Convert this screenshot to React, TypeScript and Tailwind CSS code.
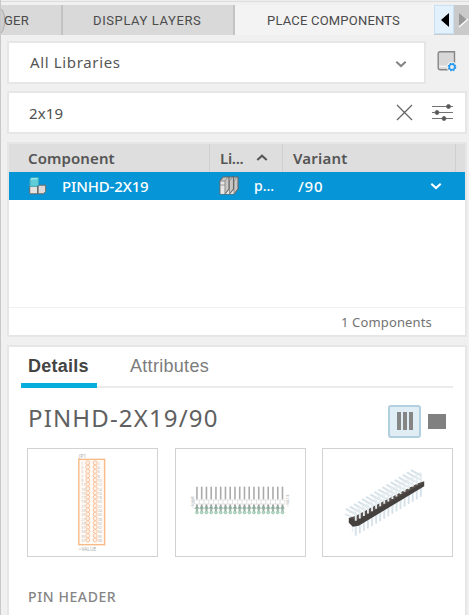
import React from "react";

const noto = "font-['Noto_Sans',sans-serif]";
const arial = "font-['Liberation_Sans',Arial,sans-serif]";
const roboto = "font-['Roboto',sans-serif]";

function TabStrip() {
  return (
    <div className={`flex h-[30px] shrink-0 text-[13px] leading-[31px] text-[#4b4b4b] ${roboto}`}>
      <div className="relative w-[62px] shrink-0 overflow-hidden border-r-2 border-[#c3c3c3] bg-[#d9d9d9] pl-[3px] tracking-[0.2px]">
        <svg className="absolute left-0 top-0" width="7" height="30" viewBox="0 0 7 30" fill="none">
          <path d="M0 4C5 8 5 23 0 28" fill="#cecece" stroke="#aaa" />
        </svg>
        <span className="relative">GER</span>
      </div>
      <div className="w-[172px] shrink-0 border-r-2 border-[#c3c3c3] bg-[#d9d9d9] pl-[30px] tracking-[0.6px]">DISPLAY LAYERS</div>
      <div className="w-[199px] shrink-0 bg-[#f3f3f3] pl-[32px] tracking-[0.2px]">PLACE COMPONENTS</div>
      <div className="flex w-[36px] bg-[#cacaca]">
        <div className="h-[29px] w-[20px] border border-[#c7e2f5] bg-[#e2f1fc]">
          <svg width="18" height="27" viewBox="0 0 18 27"><path d="M14 7v14L6 14z" fill="#000" /></svg>
        </div>
        <svg width="15" height="29" viewBox="0 0 15 29">
          <path d="M5 8v14l8-7z" fill="#999" /><path d="M5 22l9-8" stroke="#fff" strokeWidth="1.3" />
        </svg>
      </div>
    </div>
  );
}

function Chevron({ up, className = "" }: { up?: boolean; className?: string }) {
  return (
    <svg className={className} width="12" height="8" viewBox="0 0 12 8" fill="none">
      <path d={up ? "M1.3 6.1L6 1.7l4.7 4.4" : "M1.3 1.7L6 6.1l4.7-4.4"} stroke="currentColor" strokeWidth="2" />
    </svg>
  );
}

function LibraryManagerIcon() {
  return (
    <svg width="21" height="22" viewBox="0 0 21 22" fill="none">
      <path d="M3 .8h14.5v18H3.2a2 2 0 0 1-2-2V2.6A1.8 1.8 0 0 1 3 .8Z" fill="#d7d7d7" stroke="#858585" strokeWidth="1.4" />
      <path d="M2.2 15.4h10" stroke="#f4f4f4" strokeWidth="1.5" />
      <circle cx="15" cy="16" r="5.4" fill="#f0f0f0" />
      <circle cx="15" cy="16" r="3.6" stroke="#2799ee" strokeWidth="1.4" strokeDasharray="1.7 1.13" />
      <circle cx="15" cy="16" r="2.7" stroke="#2799ee" strokeWidth="1.5" />
    </svg>
  );
}

function BlocksIcon() {
  return (
    <svg width="18" height="18" viewBox="0 0 18 18" strokeLinejoin="round">
      <path d="M.7 9h8v7.8h-8z" fill="#e5e2e2" stroke="#686868" />
      <path d="M9 9.7l1.5-1.5h6.2v6.2l-2 2.4H9z" fill="#dedada" stroke="#686868" />
      <path d="M1 2.4L2.4.8h7v7L8 9.3H1z" fill="#60cdd8" stroke="#46adbc" />
      <path d="M1 2.5h6.8L9.2 1H2.4z" fill="#96e7ea" />
      <path d="M8.7 9.2v7.3" stroke="#686868" />
    </svg>
  );
}

function BooksIcon() {
  return (
    <svg width="20" height="20" viewBox="0 0 20 20" strokeLinejoin="round">
      {[9, 4.5, 0].map((x) => (
        <g key={x} transform={`translate(${x} 0)`}>
          <path d="M1 5l3-4h6v12l-4 5H1z" fill="#c9c6c6" stroke="#686868" strokeWidth="1.1" />
          <path d="M1.6 5.4h4V18h-4z" fill="#e8e5e5" />
          <path d="M1 5h5l3-4M6 5v13M1 9h5" fill="none" stroke="#858585" strokeWidth=".8" />
        </g>
      ))}
    </svg>
  );
}

function SearchBox() {
  return (
    <div className="ml-[6px] mr-[2px] mt-[7px] flex h-[43px] shrink-0 items-center border-2 border-[#e6e6e6] bg-white pl-[20px] pr-[11px]">
      <span className={`flex-1 pt-px text-[15px] tracking-[0.1px] text-[#505050] ${noto}`}>2x19</span>
      <svg width="17" height="17" viewBox="0 0 17 17"><path d="M1 1l15 15M16 1L1 16" stroke="#666" strokeWidth="1.3" /></svg>
      <svg className="ml-[19px]" width="22" height="18" viewBox="0 0 22 18" stroke="#737373" fill="#555">
        <path d="M0 2.5h21M0 8.5h21M0 14.5h21" strokeWidth="1.1" />
        <circle cx="16.5" cy="2.5" r="2" /><circle cx="5" cy="8.5" r="2" /><circle cx="12" cy="14.5" r="2" />
      </svg>
    </div>
  );
}

function ComponentTable() {
  return (
    <div className={`ml-[6px] mr-[2px] mt-[8px] h-[195px] shrink-0 border-2 border-[#e6e6e6] bg-white ${noto}`}>
      <div className="flex h-[28px] items-center bg-[#dedede] text-[15px] font-semibold text-[#555]">
        <div className="h-full w-[201px] border-r border-[#cfcfcf] pl-[19px] leading-[29px] tracking-[0.1px]">Component</div>
        <div className="flex h-full w-[73px] items-center border-r border-[#cfcfcf] pl-[10px]">
          <span className="w-[36px] tracking-[-0.3px]">Li...</span><Chevron up />
        </div>
        <div className="h-full flex-1 pl-[10px] leading-[29px] tracking-[0.2px]">Variant</div>
        <div className="h-full w-[10px] border-l border-[#cfcfcf]" />
      </div>
      <div className="flex h-[28px] items-center bg-[#0696d7] text-[14px] font-medium text-white">
        <div className="flex w-[201px] items-center pl-[20px]">
          <BlocksIcon /><span className="ml-[15px] text-[15px] leading-5 tracking-[-0.15px]">PINHD-2X19</span>
        </div>
        <div className="flex w-[73px] items-center pl-[9px]"><BooksIcon /><span className="ml-[15px] leading-5">p...</span></div>
        <span className="flex-1 pl-[15px] text-[15px] tracking-[0.8px]">/90</span>
        <Chevron className="mr-[23px]" />
      </div>
      <div className="h-[108px] border-b border-[#edf1f1]" />
      <div className="pr-[33px] text-right text-[13px] leading-[28px] tracking-[0.15px] text-[#737373]">1 Components</div>
    </div>
  );
}

const pins = Array.from({ length: 19 }, (_, i) => i);

function SymbolPreview() {
  return (
    <svg width="130" height="108" viewBox="0 0 130 108" className={noto}>
      <rect x="51.2" y="10" width="26" height="86" fill="#fffaf5" stroke="#f7ba89" strokeWidth="1.4" />
      <text x="51.5" y="9" fontSize="5" fill="#aaa">JP1</text>
      <text x="51" y="102" fontSize="5" fill="#aaa">&gt;VALUE</text>
      {pins.map((i) => (
        <g key={i} transform={`translate(.7 ${13.5 + i * 4.32})`}>
          <circle cx="59.5" cy="0" r="2" fill="#fff3e9" stroke="#f7c19c" strokeWidth="1" />
          <circle cx="67" cy="0" r="2" fill="#fff3e9" stroke="#f7c19c" strokeWidth="1" />
          <text x="53" y="2" fontSize="3.6" fill="#bbb">{i * 2 + 1}</text>
          <text x="69.5" y="2" fontSize="3.6" fill="#bbb">{i * 2 + 2}</text>
        </g>
      ))}
    </svg>
  );
}

function FootprintPreview() {
  return (
    <svg width="130" height="108" viewBox="0 0 130 108" className={noto}>
      {pins.map((i) => (
        <g key={i} transform={`translate(${21.1 + i * 4.79} 0)`}>
          <path d="M0 37.5v13" stroke="#aaa" strokeWidth="1.6" />
          <rect x="-2.4" y="51" width="4.8" height="4" fill="white" stroke="#ddd" strokeWidth=".7" />
          <path d="M0 55.5v7" stroke="#999" strokeWidth="1.8" />
          <circle cx="0" cy="59" r="1.6" fill="#8d9993" stroke="#a5c9b5" strokeWidth=".7" />
          <circle cx="0" cy="63.5" r="1.4" fill="#bad8c8" stroke="#9bc9b0" />
        </g>
      ))}
      <path d="M18 59.5h91" stroke="#a4c7b5" strokeWidth=".6" />
      <text transform="translate(18 59) rotate(-90)" fontSize="3.6" fill="#bbb">&gt;NAME</text>
      <text transform="translate(114 58) rotate(-90)" fontSize="3.6" fill="#bbb">&gt;VALUE</text>
    </svg>
  );
}

function PackagePreview() {
  return (
    <svg width="130" height="108" viewBox="0 0 130 108" fill="none">
      {pins.filter((i) => i < 17).map((i) => {
        const x = 33 + i * 4.1;
        const y = 76 - i * 2.45;
        return (
          <g key={i}>
            <path d={`M${x} ${y}v11`} stroke="#d5e1e9" strokeWidth="1.9" />
            <path d={`M${x - 3.3} ${y}v7`} stroke="#e6edf1" strokeWidth="1.3" />
            <path d={`M${x + 1} ${y - 10}l-11 -6`} stroke="#d6e2ea" strokeWidth="2" />
            <path d={`M${x + 1} ${y - 6}l-12 -5`} stroke="#e0e8ed" strokeWidth="1.7" />
          </g>
        );
      })}
      <path d="M26 69l7-2 63-33 6-2v5L36 77l-6 1-4-4z" fill="#45413f" />
      <path d="M27 69l7-2 62-33 6-1-67 38z" fill="#5b514c" />
      {pins.filter((i) => i < 17).map((i) => {
        const x = 33 + i * 4.1;
        const y = 70 - i * 2.45;
        return <path key={i} d={`M${x} ${y + 2}v-8l-2-1.2`} stroke="#e4ecf0" strokeWidth="1.9" />;
      })}
    </svg>
  );
}

function Details() {
  return (
    <div className="ml-[6px] mr-[2px] mt-[8px] h-[270px] shrink-0 border-2 border-b-0 border-[#e6e6e6] bg-white">
      <div className={`ml-[12px] mr-[12px] flex h-[41px] border-b-2 border-[#ebebeb] text-[18px] ${arial}`}>
        <div className="h-[41px] w-[76px] border-b-[5px] border-[#06addd] pl-[7px] pt-[6px] font-bold tracking-[0.25px] text-[#444]">Details</div>
        <div className="pl-[33px] pt-[6px] tracking-[0.3px] text-[#7c7c7c]">Attributes</div>
      </div>
      <div className="flex h-[60px] items-center pl-[19px] pr-[19px]">
        <h1 className={`flex-1 text-[24px] tracking-[1.15px] text-[#606060] ${noto}`}>PINHD-2X19/90</h1>
        <div className="mt-[6px] flex h-[33px] w-[33px] items-center justify-center gap-[2px] rounded-[3px] border-2 border-[#b2cfdf] bg-[#e1edf5]">
          <div className="h-[18px] w-[4px] bg-[#858585]" /><div className="h-[18px] w-[4px] bg-[#858585]" /><div className="h-[18px] w-[4px] bg-[#858585]" />
        </div>
        <div className="ml-[7px] mt-[6px] h-[15px] w-[18px] bg-[#808080]" />
      </div>
      <div className="ml-[18px] flex gap-[16.5px]">
        {[SymbolPreview, FootprintPreview, PackagePreview].map((Preview, i) => (
          <div key={i} className="flex h-[109px] w-[131px] items-center justify-center overflow-hidden border border-[#d2d2d2]"><Preview /></div>
        ))}
      </div>
      <p className={`ml-[19px] mt-[29px] text-[14px] font-medium leading-[22px] tracking-[0.6px] text-[#858585] ${noto}`}>PIN HEADER</p>
    </div>
  );
}

export default function App() {
  return (
    <div className="flex h-[615px] w-[469px] flex-col overflow-hidden border-l border-[#c8c8c8] bg-[#f0f0f0]">
      <div className="mb-[3px] h-[2px] shrink-0 border-b border-[#ddd] bg-[#eee]" />
      <TabStrip />
      <div className="ml-[6px] mt-[6px] flex shrink-0">
        <div className="flex h-[43px] w-[419px] items-center border-2 border-[#e6e6e6] bg-white pl-[21px] pr-[17px]">
          <span className={`flex-1 text-[15px] tracking-[0.65px] text-[#555] ${noto}`}>All Libraries</span>
          <Chevron className="mt-[2px] text-[#858585]" />
        </div>
        <div className="ml-[11px] mt-[10px]"><LibraryManagerIcon /></div>
      </div>
      <SearchBox />
      <ComponentTable />
      <Details />
    </div>
  );
}
